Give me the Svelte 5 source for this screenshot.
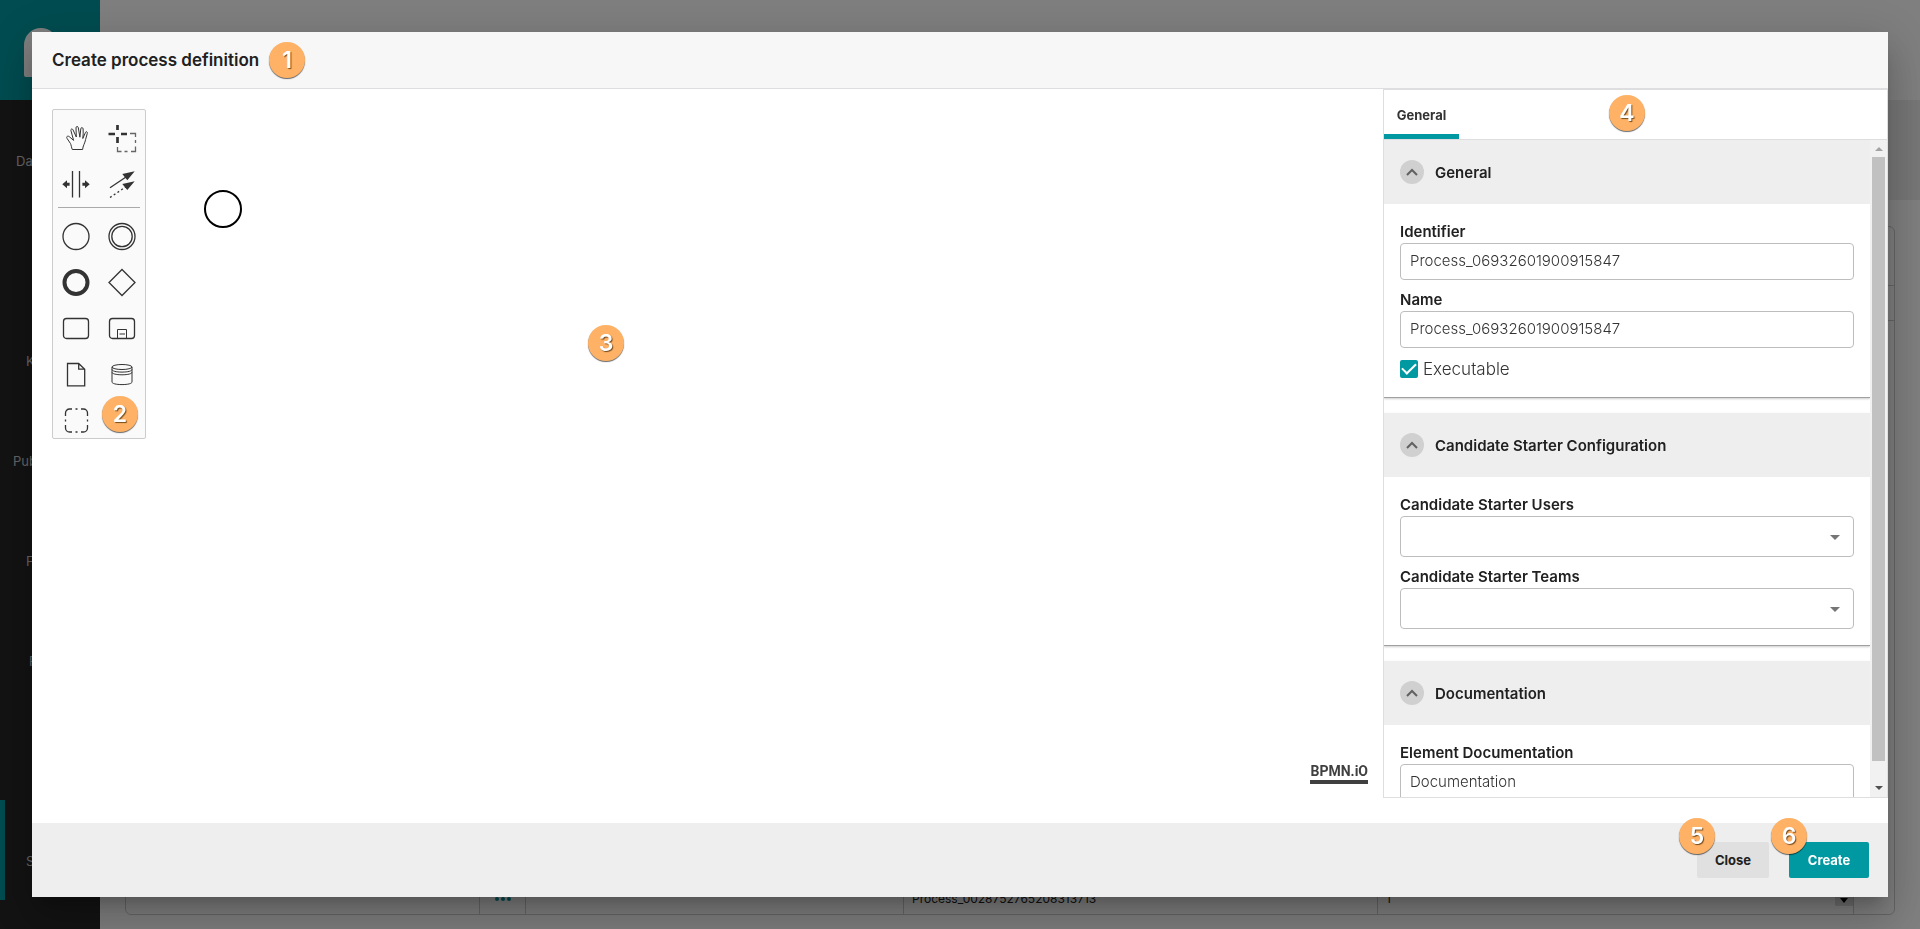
<script>
  let identifier = 'Process_06932601900915847'
  let name = 'Process_06932601900915847'
  let executable = true
  let documentation = 'Documentation'
  let users = ''
  let teams = ''

  let open = { general: true, starter: true, docs: true }
  const toggle = (key) => (open[key] = !open[key])

  const menu = [
    { label: 'Da', indent: 16 },
    { label: '', indent: 0 },
    { label: 'K', indent: 26 },
    { label: 'Pub', indent: 13 },
    { label: 'F', indent: 26 },
    { label: 'P', indent: 29 },
    { label: '', indent: 0 },
    { label: 'S', indent: 26, active: true }
  ]
</script>

{#snippet groupHead(key, title)}
  <div class="group-head">
    <button class="collapse" class:closed={!open[key]} aria-label={title} on:click={() => toggle(key)}>
      <svg width="12" height="8" viewBox="0 0 12 8"><path d="M1 7l5-5 5 5" /></svg>
    </button>
    <h3>{title}</h3>
  </div>
{/snippet}

<div class="page">
  <nav class="sidebar">
    <div class="brand">
      <svg width="56" height="56" viewBox="0 0 56 56">
        <path d="M2 53V23a17 17 0 0 1 34 0v30a2 2 0 0 1-2 2H4a2 2 0 0 1-2-2z" fill="#fff" />
      </svg>
    </div>
    {#each menu as item}
      <a href="#menu" class="menu-item" class:active={item.active} style="padding-left: {item.indent}px">{item.label}</a>
    {/each}
  </nav>
  <main class="main">
    <div class="topbar"></div>
    <div class="toolbar"></div>
    <div class="card">
      <div class="card-title"></div>
      <div class="card-filter"></div>
      <div class="row">
        <div></div>
        <div class="more"><span class="dots"><i></i><i></i><i></i></span></div>
        <div></div>
        <div>Process_0028752765208313713</div>
        <div class="version">1<span class="spin"><svg width="8" height="5"><path d="M0 0h8L4 5z" /></svg></span></div>
        <div></div>
      </div>
    </div>
  </main>
</div>

<div class="overlay">
  <div class="modal" role="dialog" aria-label="Create process definition">
    <header class="modal-head">
      <h2>Create process definition</h2>
      <span class="badge">1</span>
    </header>

    <div class="modal-body">
      <div class="canvas">
        <div class="palette">
          <div class="tools">
            <svg viewBox="0 0 30 30">
              <path
                class="thin"
                d="M11.3 26.5h10.3c.2-3.400 2.400-6.400 3-10l1.700-6.200c.4-1.700-1.400-2.200-1.900-.7l-2.600 5.900c.4-3.400.6-6.600.3-9.700-.2-1.600-2.200-1.600-2.300 0l-.9 8.400-1.600-9.600c-.4-1.600-2.300-1.400-2.300.2l.3 9.200-3.300-7.200c-.7-1.500-2.500-.8-2.100.7l2.700 9.900-4.300-3.700c-1.700-1.400-3.400.2-2.200 1.800l3.300 4.900c.9 1.500 1 4.300 1.900 6.100z"
              />
            </svg>
            <svg viewBox="0 0 30 30">
              <path class="bold" d="M10.5 2v5M10.5 14v6M1.500 11h6.500M14 11h6" />
              <path class="dim" d="M23 10.500h5.500v3.500M28.500 17v3M28.500 23.500v5H24M20.500 28.500h-3M14.500 28.500h-4V24" />
            </svg>
            <svg viewBox="0 0 30 30">
              <path d="M11.500 2v26.500M18.500 2v26.500" />
              <path class="solid" d="M1.300 15.300l4.700-4v2.500h2.600v3H6v2.500zM28.700 15.300l-4.700-4v2.500h-2.600v3H24v2.500z" />
            </svg>
            <svg viewBox="0 0 30 30">
              <path d="M3 18.700L19 8" />
              <path d="M3 28.500L19 17.700" stroke-dasharray="2 2.500" />
              <path class="solid" d="M27.700 2.300L15.300 5l5 6.200zM27.700 12.300L15.300 15l5 6z" />
            </svg>
          </div>
          <hr />
          <div class="tools">
            <svg viewBox="0 0 30 30"><circle cx="15" cy="14.5" r="13" /></svg>
            <svg viewBox="0 0 30 30"><circle cx="15" cy="14.5" r="13" /><circle cx="15" cy="14.5" r="10.2" /></svg>
            <svg viewBox="0 0 30 30"><circle class="thick" cx="15" cy="14.5" r="11.5" /></svg>
            <svg viewBox="0 0 30 30"><path d="M15 1.500l13 13-13 13-13-13z" /></svg>
            <svg viewBox="0 0 30 30"><rect x="2.5" y="4.5" width="25" height="20" rx="3" /></svg>
            <svg viewBox="0 0 30 30">
              <rect x="2.5" y="4.5" width="25" height="20" rx="3" />
              <path class="thin" d="M10.500 24.500v-9h9v9M12.500 20h5.500" />
            </svg>
            <svg viewBox="0 0 30 30"><path d="M6.500 3.500h11.200l6 5.700v16.600H6.500zM17.700 3.500v5.700h6" /></svg>
            <svg viewBox="0 0 30 30">
              <ellipse class="thin" cx="15" cy="7" rx="10" ry="2.5" />
              <path
                class="thin"
                d="M5 7v15c0 1.500 4 2.600 10 2.600S25 23.500 25 22V7M5 9.500c0 1.500 4 2.600 10 2.600s10-1.100 10-2.600M5 12.200c0 1.500 4 2.600 10 2.600s10-1.100 10-2.600"
              />
            </svg>
            <svg viewBox="0 0 30 30">
              <path
                d="M4.500 10V7a4 4 0 0 1 4-4H11M20 3h2.500a4 4 0 0 1 4 4v3M26.500 19v3a4 4 0 0 1-4 4H20M11 26H8.500a4 4 0 0 1-4-4v-3M14.500 3h2M14.500 26h2M4.500 13.500v2M26.500 13.500v2"
              />
            </svg>
          </div>
          <span class="badge on-palette">2</span>
        </div>
        <svg class="start-event" width="40" height="40"><circle cx="20" cy="20" r="18" /></svg>
        <span class="badge on-canvas">3</span>
        <a class="bpmn" href="#bpmn">BPMN.iO</a>
      </div>

      <aside class="panel">
        <div class="tabs">
          <button class="tab">General</button>
          <span class="badge on-tabs">4</span>
        </div>
        <div class="scroll">
          <div class="groups">
            <section class="group">
              {@render groupHead('general', 'General')}
              {#if open.general}
                <div class="fields">
                  <label for="identifier">Identifier</label>
                  <input id="identifier" type="text" bind:value={identifier} />
                  <label for="name">Name</label>
                  <input id="name" type="text" bind:value={name} />
                  <div class="check">
                    <input id="executable" type="checkbox" bind:checked={executable} />
                    <label for="executable">Executable</label>
                  </div>
                </div>
              {/if}
            </section>

            <section class="group">
              {@render groupHead('starter', 'Candidate Starter Configuration')}
              {#if open.starter}
                <div class="fields">
                  <label for="users">Candidate Starter Users</label>
                  <div class="select">
                    <select id="users" bind:value={users}><option value=""></option></select>
                    <svg width="10" height="5"><path d="M0 0h10L5 5z" /></svg>
                  </div>
                  <label for="teams">Candidate Starter Teams</label>
                  <div class="select">
                    <select id="teams" bind:value={teams}><option value=""></option></select>
                    <svg width="10" height="5"><path d="M0 0h10L5 5z" /></svg>
                  </div>
                </div>
              {/if}
            </section>

            <section class="group">
              {@render groupHead('docs', 'Documentation')}
              {#if open.docs}
                <div class="fields">
                  <label for="docs">Element Documentation</label>
                  <input id="docs" type="text" bind:value={documentation} />
                </div>
              {/if}
            </section>
          </div>
          <div class="scrollbar">
            <svg width="8" height="4"><path d="M0 4h8L4 0z" fill="#a3a3a3" /></svg>
            <div class="thumb"></div>
            <svg width="8" height="4"><path d="M0 0h8L4 4z" fill="#505050" /></svg>
          </div>
        </div>
      </aside>
    </div>

    <footer class="modal-foot">
      <div class="action">
        <button class="btn">Close</button>
        <span class="badge on-button">5</span>
      </div>
      <div class="action">
        <button class="btn primary">Create</button>
        <span class="badge on-button">6</span>
      </div>
    </footer>
  </div>
</div>

<style>
  :global(body) {
    font-family: Inter, 'Open Sans', sans-serif;
    font-size: 15px;
    color: #212121;
  }

  * {
    box-sizing: border-box;
  }

  h2,
  h3 {
    margin: 0;
    font-weight: 600;
  }

  button,
  input,
  select {
    font-family: inherit;
    margin: 0;
  }

  .page {
    display: flex;
    height: 100vh;
    overflow: hidden;
  }

  .sidebar {
    flex: 0 0 100px;
    background: #262626;
  }

  .brand {
    height: 100px;
    padding: 22px;
    background: #0099a1;
  }

  .menu-item {
    display: flex;
    align-items: center;
    height: 100px;
    padding-top: 22px;
    font-size: 13px;
    color: #ccc;
    text-decoration: none;
  }

  .menu-item.active {
    box-shadow: inset 5px 0 #0099a1;
  }

  .main {
    flex: 1;
    display: flex;
    flex-direction: column;
    background: #fff;
  }

  .topbar {
    flex: 0 0 100px;
  }

  .toolbar {
    flex: 0 0 100px;
    background: #eee;
  }

  .card {
    flex: 1;
    display: flex;
    flex-direction: column;
    margin: 26px 25px 14px;
    border: 1px solid #ccc;
    border-radius: 6px;
  }

  .card-title {
    flex: 0 0 59px;
    border-bottom: 1px solid #ccc;
  }

  .card-filter {
    flex: 0 0 35px;
    border-bottom: 1px solid #ccc;
  }

  .row {
    flex: 1;
    display: grid;
    grid-template-columns: 354fr 46px 378fr 474fr 476fr 40px;
    font-size: 12px;
  }

  .row > div {
    display: flex;
    align-items: flex-end;
    padding: 0 8px 8px;
    border-right: 1px solid #ccc;
  }

  .row > div:last-child {
    border: 0;
  }

  .row .more {
    justify-content: center;
    padding-bottom: 13px;
  }

  .row .version {
    justify-content: space-between;
    padding-right: 0;
  }

  .spin {
    display: grid;
    place-items: center;
    width: 18px;
    height: 12px;
    background: #ddd;
  }

  .dots {
    display: flex;
    gap: 2px;
  }

  .dots i {
    width: 4px;
    height: 4px;
    border-radius: 50%;
    background: #0099a1;
  }

  .overlay {
    position: fixed;
    inset: 0;
    display: flex;
    padding: 32px;
    background: rgba(0, 0, 0, 0.5);
  }

  .modal {
    flex: 1;
    display: flex;
    flex-direction: column;
    min-width: 0;
    background: #fff;
    box-shadow:
      0 11px 15px -7px rgba(0, 0, 0, 0.2),
      0 24px 38px 3px rgba(0, 0, 0, 0.14),
      0 9px 46px 8px rgba(0, 0, 0, 0.12);
  }

  .modal-head {
    flex: 0 0 57px;
    display: flex;
    align-items: center;
    gap: 10px;
    padding: 0 20px;
    background: #f7f7f7;
    border-bottom: 1px solid #dedee0;
  }

  .modal-head h2 {
    font-size: 17px;
  }

  .modal-body {
    flex: 1;
    display: flex;
    min-height: 0;
    padding-bottom: 25px;
  }

  .badge {
    display: grid;
    place-items: center;
    width: 36px;
    height: 36px;
    border-radius: 50%;
    background: #ffb266;
    color: #fff;
    font-size: 23px;
    font-weight: 600;
    line-height: 36px;
    text-shadow: 1px 1px 1px rgba(80, 50, 10, 0.8);
    box-shadow: 0 1px 1px rgba(0, 0, 0, 0.6);
  }

  .canvas {
    position: relative;
    flex: 1;
    padding: 20px;
  }

  .palette {
    position: relative;
    width: 94px;
    padding: 13px 0 2px;
    background: #fafafa;
    border: 1px solid #ccc;
    border-radius: 2px;
  }

  .tools {
    display: grid;
    grid-template-columns: 1fr 1fr;
    justify-items: center;
    row-gap: 16px;
  }

  .tools svg {
    width: 30px;
    height: 30px;
    fill: none;
    stroke: #333;
    stroke-width: 1.3;
  }

  .tools .thin {
    stroke-width: 1;
  }

  .tools .bold {
    stroke-width: 2.7;
  }

  .tools .thick {
    stroke-width: 4;
  }

  .tools .dim {
    stroke: #666;
  }

  .tools .solid {
    fill: #333;
    stroke: none;
  }

  .palette hr {
    margin: 8px 5px 14px;
    border: 0;
    border-top: 1px solid #aaa;
  }

  .on-palette {
    position: absolute;
    right: 7px;
    bottom: 6px;
  }

  .start-event {
    position: absolute;
    left: 171px;
    top: 100px;
    fill: #fff;
    stroke: #000;
    stroke-width: 2;
  }

  .on-canvas {
    position: absolute;
    left: 556px;
    top: 236px;
  }

  .bpmn {
    position: absolute;
    right: 15px;
    bottom: 14px;
    border-bottom: 4px solid #404040;
    color: #404040;
    font-family: Roboto, sans-serif;
    font-size: 14px;
    font-weight: 700;
    line-height: 18px;
    text-decoration: none;
  }

  .panel {
    flex: 0 0 505px;
    display: flex;
    flex-direction: column;
    border: 1px solid #dedee0;
  }

  .tabs {
    position: relative;
    flex: 0 0 50px;
    display: flex;
    border-bottom: 1px solid #dedee0;
  }

  .tab {
    width: 75px;
    padding: 5px 0 0;
    background: none;
    border: 0;
    border-bottom: 5px solid #0099a1;
    color: #333;
    font-size: 13px;
    font-weight: 700;
  }

  .on-tabs {
    position: absolute;
    left: 225px;
    top: 5px;
  }

  .scroll {
    flex: 1;
    display: flex;
    min-height: 0;
  }

  .groups {
    flex: 1;
    overflow: hidden;
  }

  .group {
    margin-bottom: 15px;
    border-bottom: 1px solid #a0a0a0;
    box-shadow: 0 1px 2px rgba(0, 0, 0, 0.2);
  }

  .group-head {
    display: flex;
    align-items: center;
    gap: 11px;
    height: 64px;
    padding: 0 16px;
    background: #eee;
  }

  .group-head h3 {
    font-size: 15px;
  }

  .collapse {
    display: grid;
    place-items: center;
    width: 24px;
    height: 24px;
    padding: 0;
    border: 0;
    border-radius: 50%;
    background: #d0d0d0;
    cursor: pointer;
  }

  .collapse svg {
    fill: none;
    stroke: #616161;
    stroke-width: 2;
  }

  .collapse.closed svg {
    transform: rotate(180deg);
  }

  .fields {
    display: flex;
    flex-direction: column;
    padding: 16px;
  }

  .fields > label {
    font-weight: 600;
    line-height: 23px;
  }

  .fields > input {
    height: 37px;
    padding: 0 9px 2px;
    border: 1px solid #bdbdbd;
    border-radius: 4px;
    color: #333;
    font-size: 15px;
    font-weight: 300;
  }

  .fields > input + label,
  .select + label {
    margin-top: 8px;
  }

  .check {
    display: flex;
    align-items: center;
    gap: 5px;
    height: 25px;
    margin-top: 8px;
    color: #333;
    font-size: 17px;
    font-weight: 300;
  }

  .check input {
    display: grid;
    place-items: center;
    width: 18px;
    height: 18px;
    appearance: none;
    border: 2px solid #0099a1;
    border-radius: 2px;
  }

  .check input:checked {
    background: #0099a1;
  }

  .check input:checked::before {
    content: '';
    width: 12px;
    height: 6px;
    margin-bottom: 4px;
    border-left: 2px solid #fff;
    border-bottom: 2px solid #fff;
    transform: rotate(-45deg);
  }

  .select {
    position: relative;
    display: flex;
  }

  .select select {
    flex: 1;
    height: 41px;
    appearance: none;
    background: #fff;
    border: 1px solid #bdbdbd;
    border-radius: 4px;
  }

  .select svg {
    position: absolute;
    right: 14px;
    top: 19px;
    fill: #757575;
    pointer-events: none;
  }

  .scrollbar {
    flex: 0 0 17px;
    display: flex;
    flex-direction: column;
    align-items: center;
    gap: 6px;
    padding: 7px 0;
    background: #f1f1f1;
  }

  .scrollbar svg:last-child {
    margin: auto 0 0;
  }

  .thumb {
    flex: 0 0 94%;
    width: 13px;
    background: #c1c1c1;
  }

  .modal-foot {
    flex: 0 0 74px;
    display: flex;
    align-items: center;
    justify-content: flex-end;
    gap: 20px;
    padding: 0 19px;
    background: #eee;
  }

  .action {
    position: relative;
  }

  .on-button {
    position: absolute;
    left: -18px;
    top: -24px;
  }

  .btn {
    min-width: 72px;
    height: 36px;
    padding: 0 17px;
    border: 0;
    border-radius: 2px;
    background: #e0e0e0;
    color: #212121;
    font-size: 13px;
    font-weight: 700;
    cursor: pointer;
  }

  .btn.primary {
    min-width: 80px;
    background: #0099a1;
    color: #fff;
  }
</style>
